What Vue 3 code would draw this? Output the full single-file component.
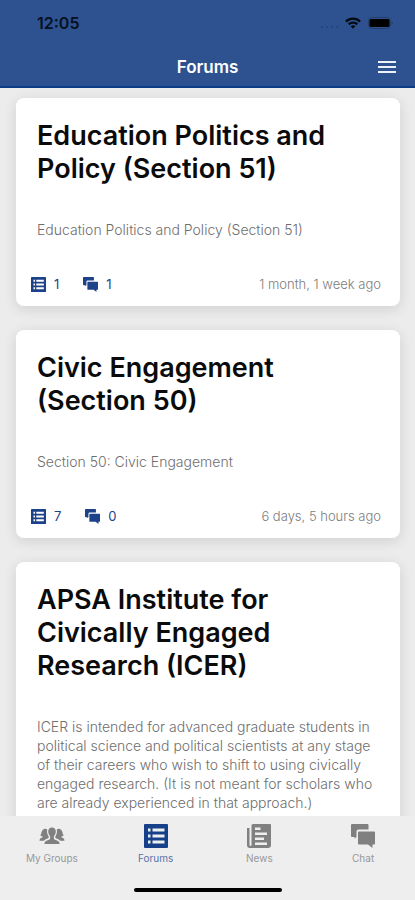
<template>
  <div class="app">
    <header class="header">
      <div class="status-bar">
        <span class="time">12:05</span>
        <div class="status-icons">
          <svg class="signal" width="18" height="4" viewBox="0 0 18 4">
            <circle v-for="n in 4" :key="n" :cx="n * 5 - 3" cy="2" r="1" />
          </svg>
          <svg width="16" height="12" viewBox="0 0 16 12">
            <g fill="none" stroke="#050a14" stroke-width="2.2">
              <path d="M0.9 4.6a10.2 10.2 0 0 1 14.2 0" />
              <path d="M3.7 7.4a6.2 6.2 0 0 1 8.6 0" />
            </g>
            <path d="M8 11.8 5.6 9.3a3.5 3.5 0 0 1 4.8 0z" fill="#050a14" />
          </svg>
          <svg width="25" height="12" viewBox="0 0 25 12">
            <rect x="0.5" y="0.5" width="22" height="11" rx="3" fill="none" stroke="#23406f" />
            <rect x="1.5" y="2" width="20" height="8" rx="1.5" fill="#000" />
            <path d="M23.5 4.5v3a1.5 1.5 0 0 0 0-3z" fill="#23406f" />
          </svg>
        </div>
      </div>
      <div class="nav-bar">
        <h1 class="nav-title">Forums</h1>
        <button class="menu-btn" type="button" aria-label="Menu">
          <svg width="18" height="12" viewBox="0 0 18 12" fill="#eef0fa">
            <rect width="18" height="2" />
            <rect y="5" width="18" height="2" />
            <rect y="10" width="18" height="2" />
          </svg>
        </button>
      </div>
    </header>

    <main class="forum-list">
      <article v-for="forum in forums" :key="forum.title" class="card">
        <h2 class="card-title">{{ forum.title }}</h2>
        <p class="card-desc">{{ forum.description }}</p>
        <div v-if="forum.updated" class="card-footer">
          <span class="stat">
            <svg class="stat-icon" viewBox="0 0 24 24">
              <path :d="icons.forums" fill-rule="evenodd" />
            </svg>
            {{ forum.topics }}
          </span>
          <span class="stat">
            <svg class="stat-icon" viewBox="0 0 24 24">
              <path :d="icons.chat" fill-rule="evenodd" />
            </svg>
            {{ forum.replies }}
          </span>
          <span class="updated">{{ forum.updated }}</span>
        </div>
      </article>
    </main>

    <nav class="tab-bar">
      <div class="tabs">
        <a
          v-for="tab in tabs"
          :key="tab.icon"
          href="#"
          class="tab"
          :class="{ active: tab.icon === activeTab }"
          @click.prevent="activeTab = tab.icon"
        >
          <svg class="tab-icon" viewBox="0 0 24 24">
            <path :d="icons[tab.icon]" fill-rule="evenodd" />
          </svg>
          <span>{{ tab.label }}</span>
        </a>
      </div>
      <div class="home-indicator"></div>
    </nav>
  </div>
</template>

<script setup>
import { ref } from 'vue'

const activeTab = ref('forums')

const forums = [
  {
    title: 'Education Politics and Policy (Section 51)',
    description: 'Education Politics and Policy (Section 51)',
    topics: 1,
    replies: 1,
    updated: '1 month, 1 week ago'
  },
  {
    title: 'Civic Engagement (Section 50)',
    description: 'Section 50: Civic Engagement',
    topics: 7,
    replies: 0,
    updated: '6 days, 5 hours ago'
  },
  {
    title: 'APSA Institute for Civically Engaged Research (ICER)',
    description:
      'ICER is intended for advanced graduate students in political science and political scientists at any stage of their careers who wish to shift to using civically engaged research. (It is not meant for scholars who are already experienced in that approach.)'
  }
]

const tabs = [
  { icon: 'groups', label: 'My Groups' },
  { icon: 'forums', label: 'Forums' },
  { icon: 'news', label: 'News' },
  { icon: 'chat', label: 'Chat' }
]

const icons = {
  groups:
    'M12 3.5c2.5 0 3.9 1.8 3.8 4.3-.1 1.8-.9 3.3-1.9 4.2v2.6c0 .8.8 1.1 2.3 1.7 2.2.8 3.2 1.500 3.400 3.700H4.400c.2-2.200 1.200-2.900 3.400-3.700 1.500-.6 2.300-.9 2.300-1.700V12c-1-.9-1.800-2.400-1.900-4.200-.1-2.500 1.300-4.300 3.800-4.300z M3.700 5.200c1.300-.7 2.700-.5 3.500.3-.5 2.400 0 4.800 1.400 6.800l.1 1.500c-.4.5-1.500.8-2.600 1.300-.9.400-1.600.9-2.100 1.700H-.5c.1-2.100 1-2.700 2.600-3.300.8-.3.9-.8.4-1.100-.8-.5-1.700-.7-2.300-1 1.400-1.200 1.100-5 3.500-6.200z M20.300 5.200c-1.300-.7-2.700-.5-3.500.3.5 2.400 0 4.800-1.400 6.800l-.1 1.500c.4.5 1.500.8 2.600 1.300.9.400 1.600.9 2.100 1.700h4.500c-.1-2.100-1-2.700-2.600-3.300-.8-.3-.9-.8-.4-1.100.8-.5 1.700-.7 2.300-1-1.400-1.200-1.100-5-3.500-6.200z',
  forums:
    'M1 0h22a1 1 0 0 1 1 1v22a1 1 0 0 1-1 1H1a1 1 0 0 1-1-1V1a1 1 0 0 1 1-1z M4 4.5v3h2.5v-3z M8.5 4.5v3h12v-3z M4 10.5v3h2.5v-3z M8.5 10.5v3h12v-3z M4 16.5v3h2.5v-3z M8.5 16.5v3h12v-3z',
  news:
    'M6 0h17a1 1 0 0 1 1 1v20a3 3 0 0 1-3 3H3a3 3 0 0 1-3-3V4h2.5v17a1 1 0 0 0 2 0V1.5A1.5 1.5 0 0 1 6 0z M8 3.5v2.5h5.5V3.5z M8 8.5V11h12V8.5z M8 13.5V16h9v-2.5z M8 18.5V21h12v-2.5z',
  chat:
    'M1 0h15.5a1 1 0 0 1 1 1v4.5H7.5a2 2 0 0 0-2 2V13L3.5 14.5V13H1a1 1 0 0 1-1-1V1a1 1 0 0 1 1-1z M8 7.5h15a1 1 0 0 1 1 1v11a1 1 0 0 1-1 1h-1.5V24L17 20.5H8a1 1 0 0 1-1-1v-11a1 1 0 0 1 1-1z'
}
</script>

<style>
body {
  margin: 0;
  background: #eeeeee;
}
</style>

<style scoped>
.app {
  display: flex;
  flex-direction: column;
  height: 100vh;
  background: #ececec;
  font-family: Inter, "Liberation Sans", sans-serif;
  color: #0b0b0c;
}

.header {
  flex: none;
  background: #2d528f;
  border-bottom: 2px solid #0d3c86;
}

.status-bar {
  display: flex;
  align-items: center;
  justify-content: space-between;
  height: 46px;
  padding: 0 22px 0 37px;
}

.time {
  font-size: 16px;
  font-weight: 600;
  color: #06101f;
}

.status-icons {
  display: flex;
  align-items: center;
  gap: 7px;
}

.signal {
  align-self: flex-end;
  fill: #23437a;
}

.nav-bar {
  display: grid;
  grid-template-columns: 1fr auto 1fr;
  align-items: center;
  height: 38px;
  padding: 2px 19px 0;
}

.nav-title {
  grid-column: 2;
  margin: 0;
  font-size: 17px;
  font-weight: 600;
  line-height: 20px;
  color: #fff;
}

.menu-btn {
  justify-self: end;
  display: flex;
  padding: 0;
  border: none;
  background: none;
  cursor: pointer;
}

.forum-list {
  flex: 1;
  min-height: 0;
  display: flex;
  flex-direction: column;
  gap: 24px;
  padding: 10px 15px 0 16px;
  overflow-y: auto;
  scrollbar-width: none;
}

.card {
  flex: none;
  padding: 21px 19px 13px 21px;
  border-radius: 8px;
  background: #fff;
  box-shadow: 0 3px 14px rgba(0, 0, 0, 0.12);
}

.card-title {
  margin: 0 0 35px;
  font-size: 27px;
  font-weight: 600;
  line-height: 33px;
}

.card-desc {
  margin: 0;
  font-size: 14px;
  font-weight: 300;
  line-height: 19px;
  color: #6e6e6e;
}

.card-footer {
  display: flex;
  align-items: center;
  gap: 24px;
  margin: 36px 0 0 -6px;
  font-size: 13px;
  line-height: 18px;
}

.stat {
  display: flex;
  align-items: center;
  gap: 8px;
  color: #1c4289;
}

.stat-icon {
  width: 15px;
  height: 15px;
  fill: #1c4289;
}

.updated {
  margin-left: auto;
  font-weight: 300;
  color: #7c7c7c;
}

.tab-bar {
  flex: none;
  display: flex;
  flex-direction: column;
  justify-content: space-between;
  align-items: center;
  height: 84px;
  background: #eeeeee;
}

.tabs {
  display: flex;
  width: 100%;
  padding-top: 8px;
}

.tab {
  flex: 1;
  display: flex;
  flex-direction: column;
  align-items: center;
  gap: 3px;
  font-size: 10px;
  line-height: 14px;
  color: #989898;
  text-decoration: none;
}

.tab-icon {
  width: 24px;
  height: 24px;
  fill: #808080;
  overflow: visible;
}

.tab.active {
  color: #5872a6;
}

.tab.active .tab-icon {
  fill: #17408a;
}

.home-indicator {
  width: 148px;
  height: 4px;
  margin-bottom: 8px;
  border-radius: 2px;
  background: #000;
}
</style>
